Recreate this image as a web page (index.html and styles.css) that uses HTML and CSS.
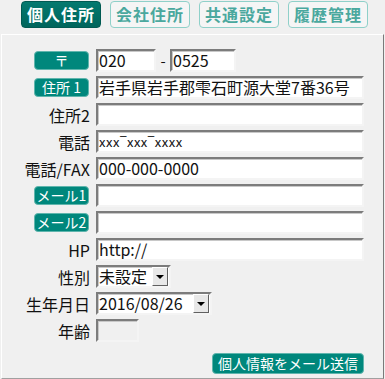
FILE: index.html
```html
<!DOCTYPE html>
<html lang="ja">
<head>
<meta charset="UTF-8">
<title>個人住所</title>
<link rel="stylesheet" href="styles.css">
</head>
<body>
<div class="tabs">
    <div class="tab active">個人住所</div>
    <div class="tab">会社住所</div>
    <div class="tab">共通設定</div>
    <div class="tab">履歴管理</div>
</div>
<div class="panel">
    <div class="form">
        <div class="label"><span class="lbtn">〒</span></div>
        <div class="field zip">
            <div class="input w60">020</div>
            <span class="dash">-</span>
            <div class="input w66">0525</div>
        </div>

        <div class="label"><span class="lbtn">住所 1</span></div>
        <div class="field"><div class="input">岩手県岩手郡雫石町源大堂7番36号</div></div>

        <div class="label">住所2</div>
        <div class="field"><div class="input"></div></div>

        <div class="label">電話</div>
        <div class="field"><div class="input small">xxx‾xxx‾xxxx</div></div>

        <div class="label">電話/FAX</div>
        <div class="field"><div class="input">000-000-0000</div></div>

        <div class="label"><span class="lbtn">メール1</span></div>
        <div class="field"><div class="input"></div></div>

        <div class="label"><span class="lbtn">メール2</span></div>
        <div class="field"><div class="input"></div></div>

        <div class="label">HP</div>
        <div class="field"><div class="input">http://</div></div>

        <div class="label">性別</div>
        <div class="field">
            <div class="input select w75">未設定<span class="arrow"></span></div>
        </div>

        <div class="label">生年月日</div>
        <div class="field">
            <div class="input select w116">2016/08/26<span class="arrow"></span></div>
        </div>

        <div class="label">年齢</div>
        <div class="field"><div class="input disabled w43"></div></div>
    </div>
    <div class="actions">
        <button class="send">個人情報をメール送信</button>
    </div>
</div>
</body>
</html>
```

FILE: styles.css
```css
* { margin:0; padding:0; box-sizing:border-box; }
body {
    font-family: "Noto Sans CJK JP", "Noto Sans", sans-serif;
    background: #f0f0f0;
    width: 385px;
    height: 379px;
    overflow: hidden;
    color: #111;
}
.tabs {
    display: flex;
    gap: 9px;
    padding: 1px 0 0 21px;
}
.tab {
    width: 80px;
    height: 27px;
    border: 1px solid #8fd0c9;
    border-radius: 4px;
    background: #f5f5f5;
    color: #4aa89e;
    font-weight: bold;
    font-size: 16px;
    line-height: 25px;
    text-align: center;
    letter-spacing: 1px;
}
.tab.active {
    background: linear-gradient(#04796f, #00655c);
    border-color: #005a52;
    color: #fff;
}
.panel {
    margin: 6px 0 0 1px;
    width: 383px;
    height: 345px;
    border-top: 1px solid #fff;
    border-left: 1px solid #fff;
    border-right: 1px solid #7a7a7a;
    border-bottom: 1px solid #a0a0a0;
    padding: 14px 19px 0 0;
}
.form {
    display: grid;
    grid-template-columns: 88px 1fr;
    column-gap: 6px;
    row-gap: 4px;
    grid-auto-rows: 23px;
}
.label {
    display: flex;
    justify-content: flex-end;
    align-items: center;
    font-size: 16px;
    white-space: nowrap;
}
.lbtn {
    width: 55px;
    height: 19px;
    margin-right: 1px;
    background: #00877c;
    border: 1px solid #5fb5ad;
    border-radius: 4px;
    color: #fff;
    font-size: 14px;
    line-height: 17px;
    text-align: center;
}
.field {
    display: flex;
    align-items: center;
}
.input {
    height: 23px;
    width: 268px;
    background: #fff;
    border: 2px solid;
    border-color: #7c7c7c #f4f4f4 #f4f4f4 #7c7c7c;
    box-shadow: inset 1px 1px 0 #c8c8c8;
    font-size: 16px;
    line-height: 19px;
    padding-left: 1px;
    white-space: nowrap;
    overflow: hidden;
    position: relative;
}
.input.small {
    font-size: 13px;
    letter-spacing: 0.5px;
}
.w60 { width: 60px; }
.w66 { width: 66px; }
.w75 { width: 75px; }
.w116 { width: 116px; }
.w43 { width: 43px; }
.dash {
    width: 14px;
    text-align: center;
    font-size: 15px;
}
.input.disabled { background: #f0f0f0; }
.arrow {
    position: absolute;
    right: 1px;
    top: 0;
    width: 16px;
    height: 19px;
    background: #e8e8e8;
    border: 1px solid;
    border-color: #fff #606060 #606060 #fff;
}
.arrow::after {
    content: "";
    position: absolute;
    left: 3px;
    top: 7px;
    border-left: 4px solid transparent;
    border-right: 4px solid transparent;
    border-top: 4px solid #000;
}
.actions {
    display: flex;
    justify-content: flex-end;
    margin-top: 11px;
}
.send {
    width: 152px;
    height: 21px;
    background: #00877c;
    border: 1px solid #5fb5ad;
    border-radius: 4px;
    color: #fff;
    font-family: inherit;
    font-size: 14px;
    line-height: 19px;
}
```
